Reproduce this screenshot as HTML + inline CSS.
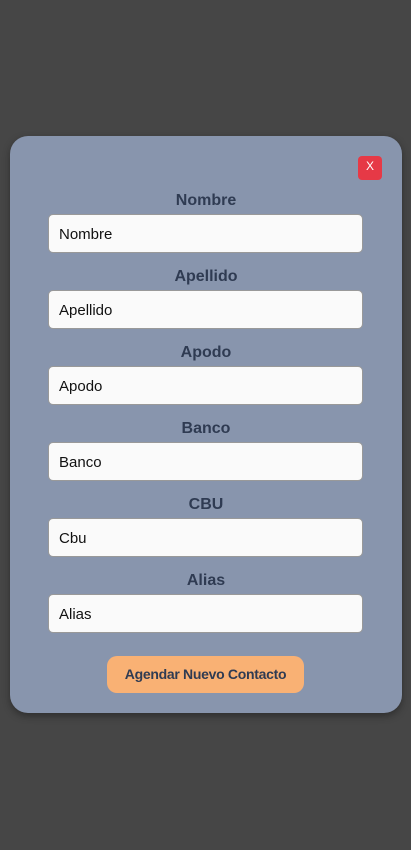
<!DOCTYPE html>
<html><head><style>
body{margin:0;width:411px;height:850px;background:#464646;font-family:"Liberation Sans",sans-serif;position:relative;overflow:hidden}
.card{position:absolute;left:10px;top:136px;width:392px;height:577px;background:#8895ad;border-radius:18px;box-shadow:0 3px 8px rgba(0,0,0,.35)}
.x{position:absolute;left:348px;top:20px;width:24px;height:24px;background:#e63946;border-radius:4px;color:#fff;font-size:12px;text-align:center;line-height:20px}
.lbl{position:absolute;left:0;width:392px;text-align:center;font-weight:bold;font-size:16px;color:#2f3b52}
.inp{position:absolute;left:38px;height:37px;background:#fafafa;border:1px solid #999;border-radius:5px;font-size:15px;color:#111;line-height:40px;padding-left:10px;width:303px}
.btn{position:absolute;left:97px;top:520px;width:197px;height:37px;background:#f9b174;border-radius:10px;text-align:center;line-height:37px;font-weight:bold;font-size:14px;color:#2f3b52;letter-spacing:-0.3px}
</style></head><body>
<div class="card">
<div class="x">X</div>
<div class="lbl" style="top:56px">Nombre</div><div class="inp" style="top:78px">Nombre</div>
<div class="lbl" style="top:132px">Apellido</div><div class="inp" style="top:154px">Apellido</div>
<div class="lbl" style="top:208px">Apodo</div><div class="inp" style="top:230px">Apodo</div>
<div class="lbl" style="top:284px">Banco</div><div class="inp" style="top:306px">Banco</div>
<div class="lbl" style="top:360px">CBU</div><div class="inp" style="top:382px">Cbu</div>
<div class="lbl" style="top:436px">Alias</div><div class="inp" style="top:458px">Alias</div>
<div class="btn">Agendar Nuevo Contacto</div>
</div>
</body></html>
